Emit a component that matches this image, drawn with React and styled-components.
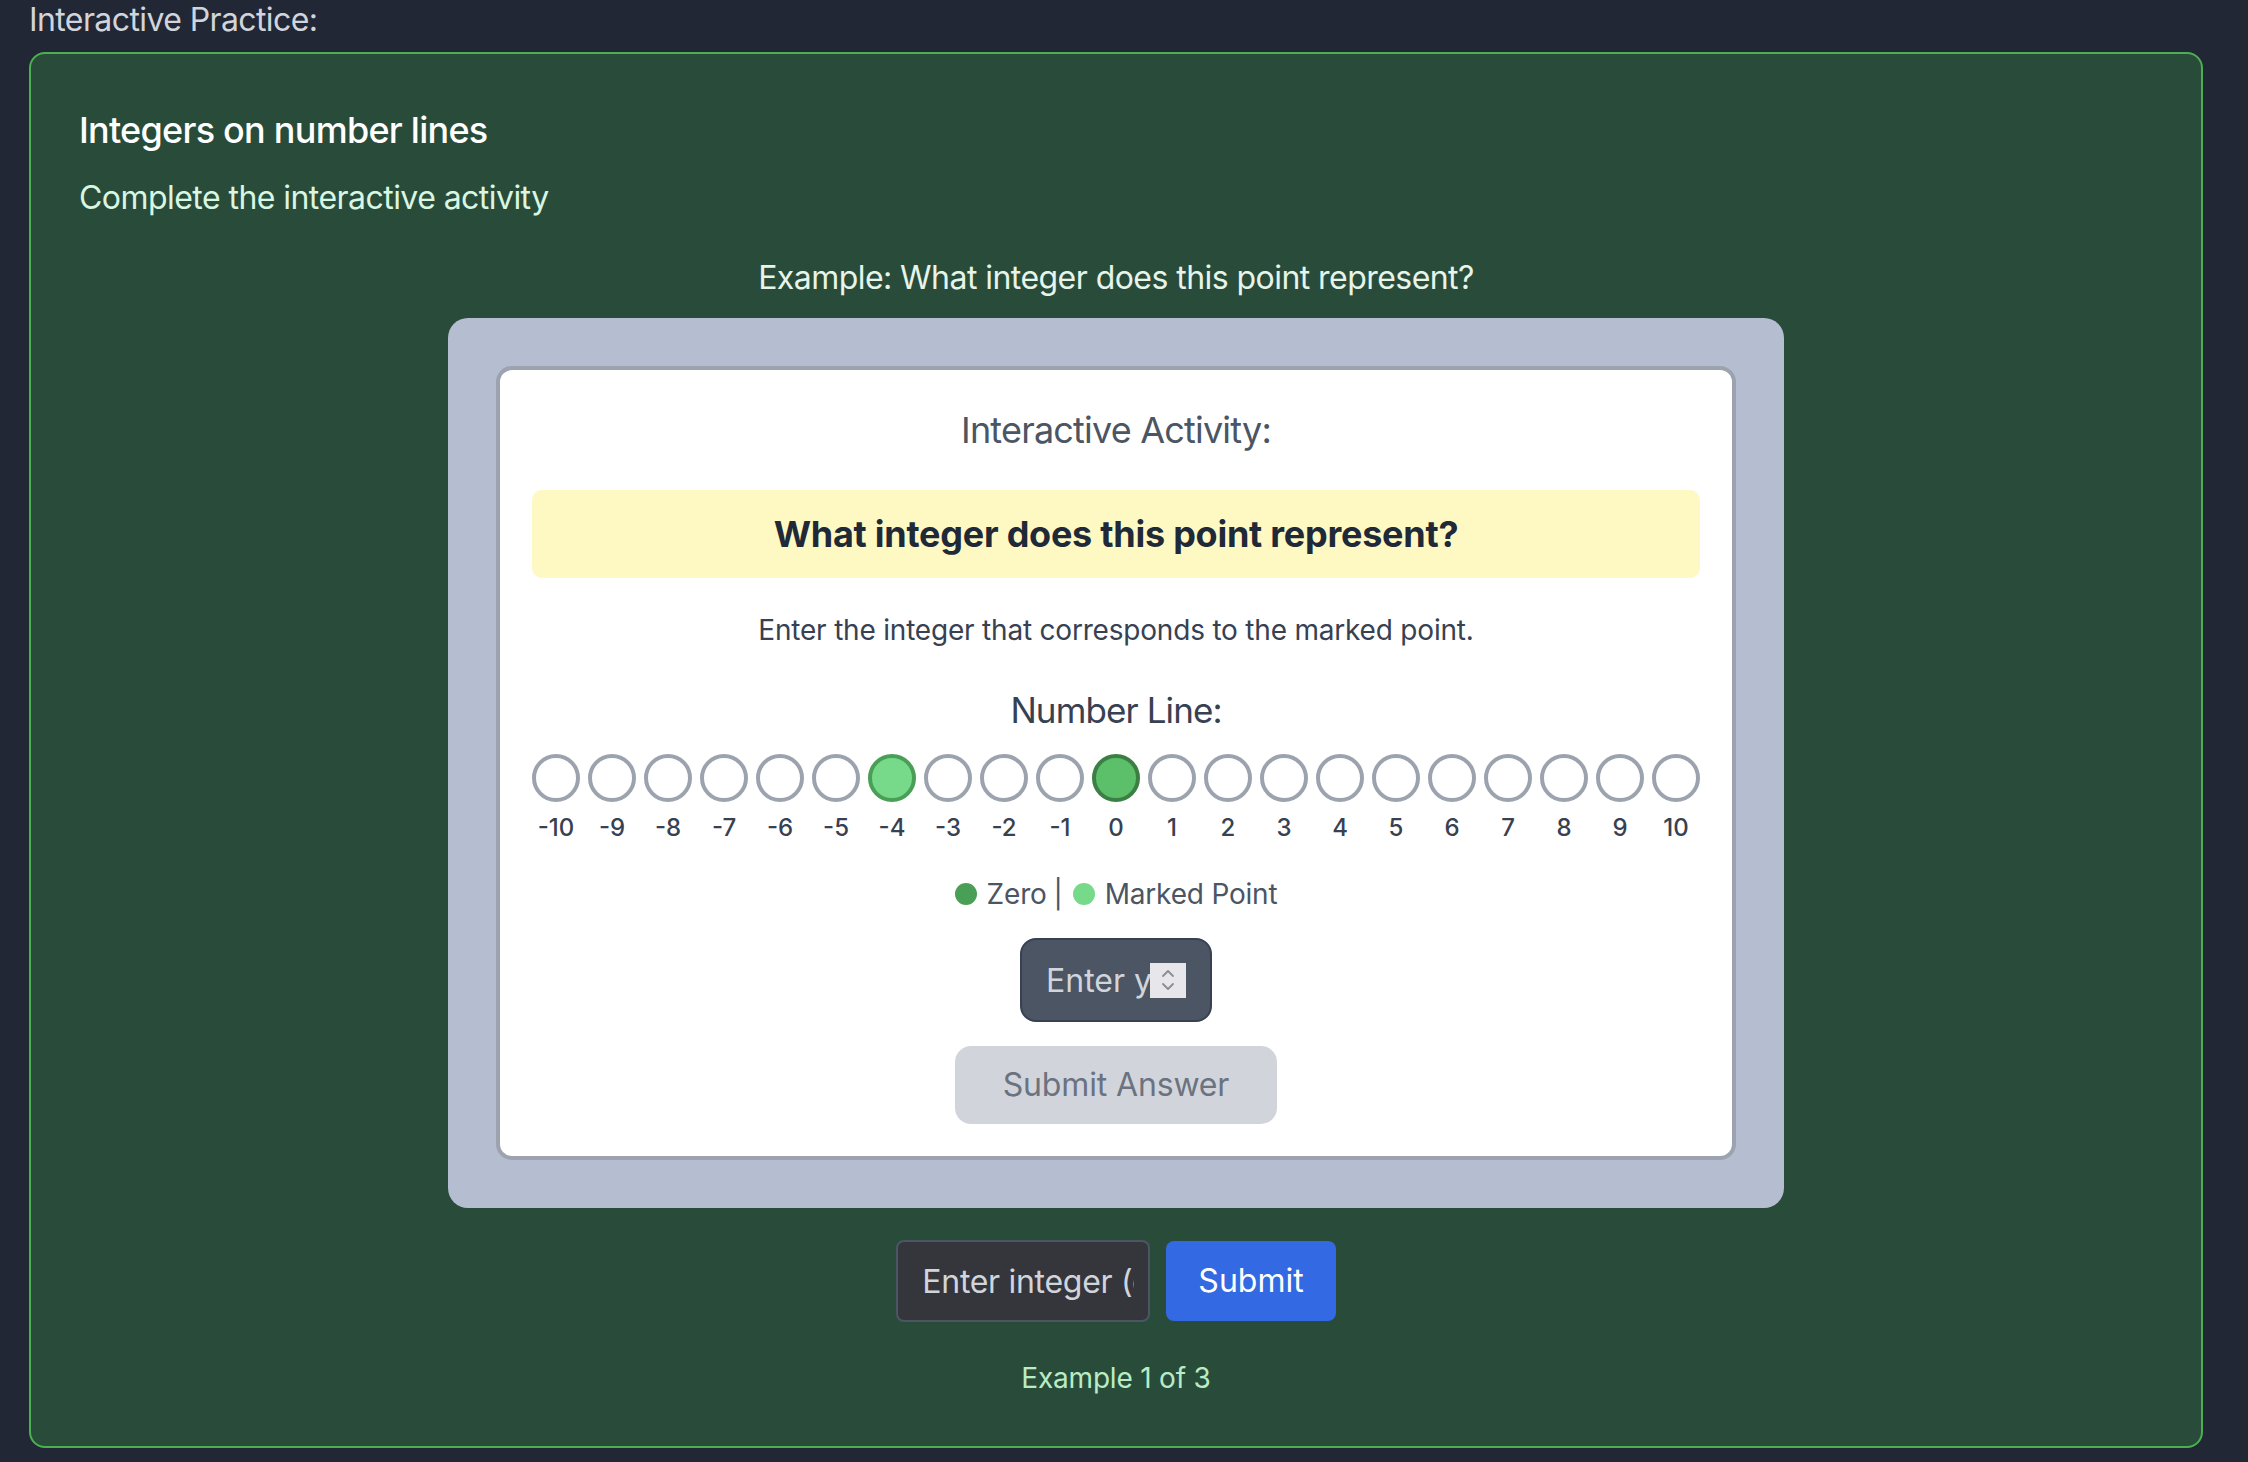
import React from 'react';
import styled, { createGlobalStyle } from 'styled-components';

const GlobalStyle = createGlobalStyle`
  html, body { margin: 0; padding: 0; background: #222736; }
  body { font-family: Inter, "Noto Sans", sans-serif; -webkit-font-smoothing: antialiased; }
  * { box-sizing: border-box; }
`;

const Page = styled.main`
  min-height: 1462px;
  padding: 0 45px 15px 29px;
  background: #222736;
`;

const SectionLabel = styled.div`
  font-size: 32px;
  line-height: 40px;
  letter-spacing: -0.6px;
  color: #d1d5db;
  margin-bottom: 12px;
`;

const Card = styled.section`
  background: #294c3a;
  border: 2px solid #4caf50;
  border-radius: 16px;
  padding: 48px;
`;

const Title = styled.h2`
  margin: 0 0 16px;
  font-size: 36px;
  line-height: 56px;
  font-weight: 500;
  letter-spacing: -0.75px;
  color: #ffffff;
`;

const Subtitle = styled.p`
  margin: 0 0 32px;
  font-size: 32px;
  line-height: 48px;
  letter-spacing: -0.55px;
  color: #d9f6e3;
`;

const ExampleCaption = styled.p`
  margin: 0 0 16px;
  text-align: center;
  font-size: 32px;
  line-height: 48px;
  letter-spacing: -0.55px;
  color: #e6f4ea;
`;

const Frame = styled.div`
  max-width: 1336px;
  margin: 0 auto;
  background: #b5bed1;
  border-radius: 20px;
  padding: 48px;
`;

const Activity = styled.div`
  display: flex;
  flex-direction: column;
  align-items: center;
  background: #ffffff;
  border: 4px solid #9ca3af;
  border-radius: 16px;
  padding: 32px;
`;

const ActivityHeading = styled.h3`
  margin: 0 0 32px;
  font-size: 36px;
  line-height: 56px;
  font-weight: 400;
  letter-spacing: -0.8px;
  color: #4b5563;
`;

const Prompt = styled.div`
  align-self: stretch;
  margin-bottom: 32px;
  padding: 16px;
  background: #fef9c3;
  border-radius: 10px;
  text-align: center;
  font-size: 36px;
  line-height: 56px;
  font-weight: 700;
  letter-spacing: -0.25px;
  color: #1f2937;
`;

const Instruction = styled.p`
  margin: 0 0 32px;
  font-size: 28px;
  line-height: 40px;
  letter-spacing: -0.2px;
  color: #374151;
`;

const LineHeading = styled.h4`
  margin: 0 0 16px;
  font-size: 35px;
  line-height: 56px;
  font-weight: 400;
  letter-spacing: -0.9px;
  color: #374151;
`;

const Ticks = styled.div`
  display: flex;
  justify-content: center;
  gap: 8px;
  margin-bottom: 30px;
`;

const Tick = styled.div`
  display: flex;
  flex-direction: column;
  align-items: center;
  gap: 10px;
  width: 48px;
`;

const dotStyles = {
  plain: { fill: '#ffffff', ring: '#9ca3af' },
  marked: { fill: '#77d98a', ring: '#4a9f57' },
  zero: { fill: '#5cbf6a', ring: '#3b7f44' },
};

const Dot = styled.button`
  width: 48px;
  height: 48px;
  padding: 0;
  border-radius: 50%;
  border: 4px solid ${(p) => dotStyles[p.$kind].ring};
  background: ${(p) => dotStyles[p.$kind].fill};
  cursor: pointer;
`;

const TickLabel = styled.span`
  font-size: 24px;
  line-height: 32px;
  font-weight: 500;
  color: #374151;
`;

const Legend = styled.div`
  display: flex;
  align-items: center;
  font-size: 28px;
  line-height: 40px;
  letter-spacing: -0.2px;
  color: #4b5563;
  margin-bottom: 24px;
`;

const Swatch = styled.span`
  display: inline-block;
  width: 22px;
  height: 22px;
  border-radius: 50%;
  background: ${(p) => p.$color};
  margin-right: 10px;
`;

const Sep = styled.span`
  margin: 0 10px 0 7px;
`;

const SpinField = styled.label`
  display: flex;
  align-items: center;
  width: 192px;
  height: 84px;
  padding: 0 24px;
  margin-bottom: 24px;
  background: #4b5563;
  border: 2px solid #374151;
  border-radius: 16px;
`;

const SpinInput = styled.input`
  flex: 1;
  min-width: 0;
  padding: 0;
  border: 0;
  outline: none;
  background: transparent;
  font-family: inherit;
  font-size: 32px;
  color: #ffffff;
  &::placeholder { color: #d1d5db; opacity: 1; }
`;

const Spinner = styled.span`
  flex: none;
  display: flex;
  align-items: center;
  justify-content: center;
  width: 36px;
  height: 35px;
  background: #e6e6eb;
`;

const GhostButton = styled.button`
  padding: 15px 48px;
  border: 0;
  border-radius: 16px;
  background: #d1d5db;
  color: #6b7280;
  font-family: inherit;
  font-size: 32px;
  line-height: 48px;
  letter-spacing: -0.15px;
  cursor: not-allowed;
`;

const AnswerRow = styled.div`
  display: flex;
  justify-content: center;
  align-items: center;
  gap: 16px;
  margin-top: 32px;
`;

const AnswerInput = styled.input`
  width: 254px;
  height: 82px;
  padding: 0 14px 0 24px;
  background: #35363c;
  border: 2px solid #4b5563;
  border-radius: 8px;
  outline: none;
  font-family: inherit;
  font-size: 32px;
  letter-spacing: -0.3px;
  color: #ffffff;
  &::placeholder { color: #d1d5db; opacity: 1; }
`;

const PrimaryButton = styled.button`
  height: 80px;
  padding: 0 32px;
  border: 0;
  border-radius: 8px;
  background: #3369e3;
  color: #ffffff;
  font-family: inherit;
  font-size: 32px;
  line-height: 48px;
  cursor: pointer;
`;

const Progress = styled.p`
  margin: 36px 0 0;
  text-align: center;
  font-size: 28px;
  line-height: 40px;
  letter-spacing: -0.2px;
  color: #b9ecc5;
`;

const SpinIcon = () => (
  <svg width="18" height="26" viewBox="0 0 18 26" fill="none" stroke="#8c8c94" strokeWidth="1.8" strokeLinecap="round" strokeLinejoin="round">
    <path d="M4 9 L9 4 L14 9" />
    <path d="M4 17 L9 22 L14 17" />
  </svg>
);

const values = Array.from({ length: 21 }, (_, i) => i - 10);

export default function App() {
  return (
    <Page>
      <GlobalStyle />
      <SectionLabel>Interactive Practice:</SectionLabel>
      <Card>
        <Title>Integers on number lines</Title>
        <Subtitle>Complete the interactive activity</Subtitle>
        <ExampleCaption>Example: What integer does this point represent?</ExampleCaption>
        <Frame>
          <Activity>
            <ActivityHeading>Interactive Activity:</ActivityHeading>
            <Prompt>What integer does this point represent?</Prompt>
            <Instruction>Enter the integer that corresponds to the marked point.</Instruction>
            <LineHeading>Number Line:</LineHeading>
            <Ticks>
              {values.map((v) => (
                <Tick key={v}>
                  <Dot $kind={v === 0 ? 'zero' : v === -4 ? 'marked' : 'plain'} aria-label={String(v)} />
                  <TickLabel>{v}</TickLabel>
                </Tick>
              ))}
            </Ticks>
            <Legend>
              <Swatch $color="#4a9f57" />
              Zero
              <Sep>|</Sep>
              <Swatch $color="#77d98a" />
              Marked Point
            </Legend>
            <SpinField>
              <SpinInput type="text" placeholder="Enter your answer" />
              <Spinner><SpinIcon /></Spinner>
            </SpinField>
            <GhostButton type="button">Submit Answer</GhostButton>
          </Activity>
        </Frame>
        <AnswerRow>
          <AnswerInput type="text" placeholder="Enter integer (e.g., -4)" />
          <PrimaryButton type="button">Submit</PrimaryButton>
        </AnswerRow>
        <Progress>Example 1 of 3</Progress>
      </Card>
    </Page>
  );
}
